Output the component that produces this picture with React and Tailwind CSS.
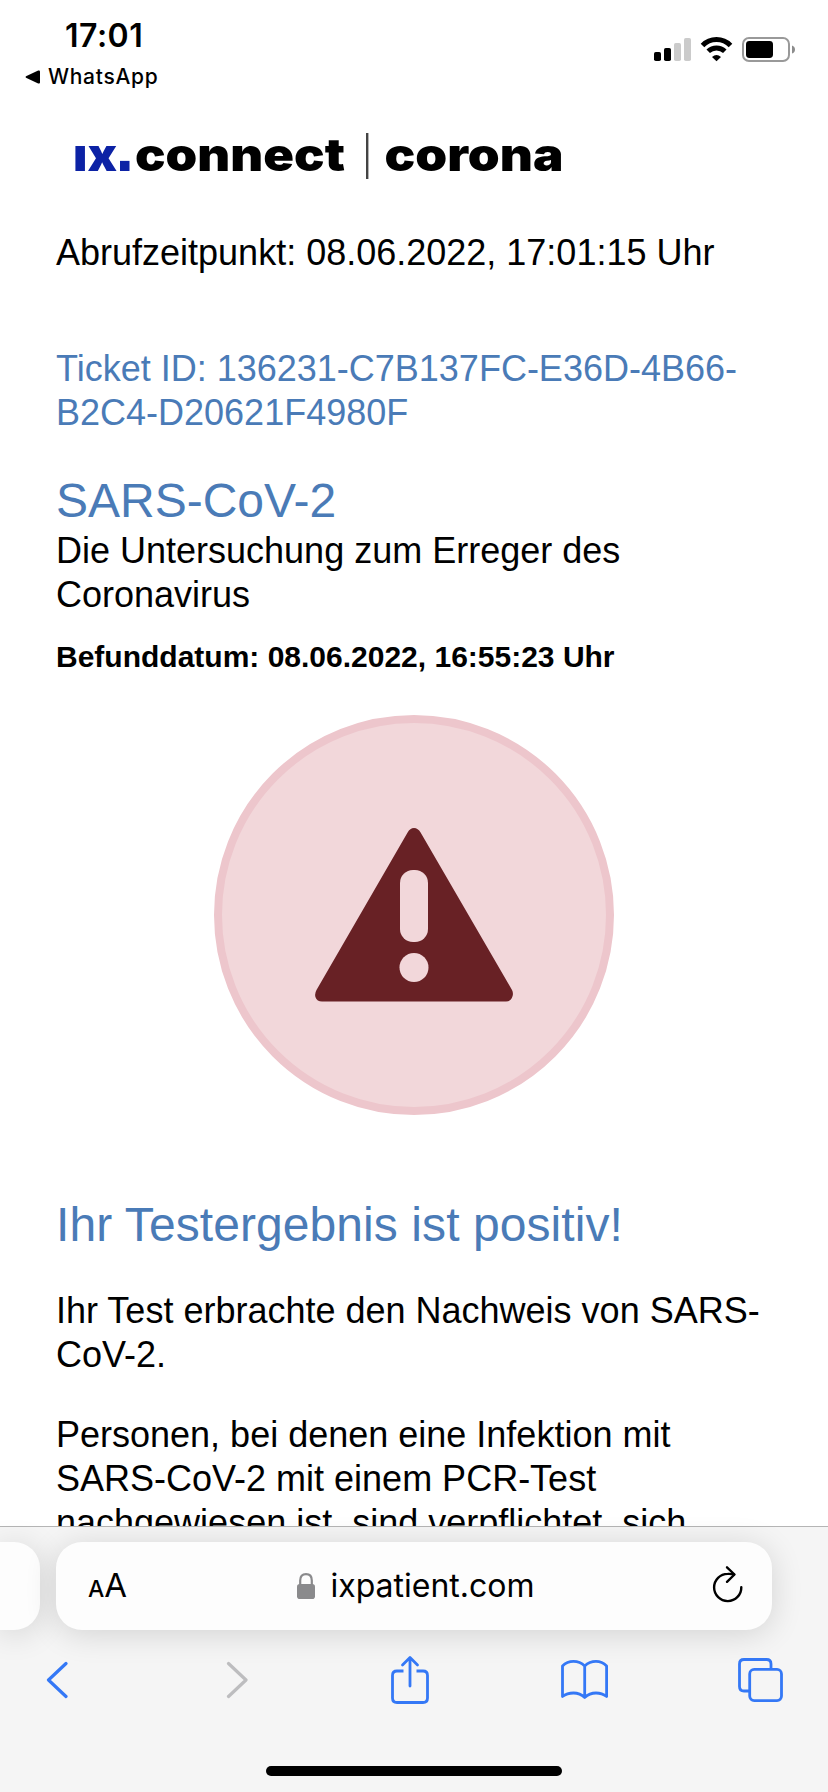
import React from 'react';

const StatusBar = () => {
    return (
        <div className="flex h-[100px] shrink-0 justify-between pl-6 pr-[33px] pt-[18px] font-['Inter',sans-serif]">
            <div>
                <p className="pl-[41px] text-[32px] leading-[36px] font-semibold tracking-[0.5px]">17:01</p>
                <div className="mt-[10px] flex items-center">
                    <svg width="16" height="14" viewBox="0 0 16 14" className="ml-[1px] mr-[7px]">
                        <path d="M1 6.2 L13.2 0.6 Q15 0 15 1.6 V12.4 Q15 14 13.2 13.4 L1 7.8 Q0 7 1 6.2Z" />
                    </svg>
                    <span className="text-[21px] leading-[26px] font-medium tracking-[0.7px]">WhatsApp</span>
                </div>
            </div>
            <svg width="142" height="28" viewBox="652 36 142 28" className="mt-[18px]">
                <rect x="653" y="52" width="7" height="9" rx="1.8" />
                <rect x="663" y="48" width="7" height="13" rx="1.8" />
                <rect x="673" y="43" width="7" height="18" rx="1.8" fill="#cbcbcb" />
                <rect x="683" y="38" width="7" height="23" rx="1.8" fill="#cbcbcb" />
                <g fill="none" stroke="#000" strokeWidth="5">
                    <path d="M701.5 45.4 A19.5 19.5 0 0 1 729.5 45.4" />
                    <path d="M707.2 51.3 A12 12 0 0 1 723.8 51.3" />
                </g>
                <path d="M711 57 Q715.5 53 720 57 L715.5 61.2Z" />
                <rect x="742" y="38" width="46" height="23" rx="6" fill="none" stroke="#999" strokeWidth="2" />
                <rect x="745" y="41" width="27" height="17" rx="3.4" />
                <path d="M791 45.5 Q794 46.5 794 49.5 Q794 52.5 791 53.5Z" fill="#8c8c8c" />
            </svg>
        </div>
    );
};

const Logo = () => {
    return (
        <svg
            width="520"
            height="70"
            viewBox="56 120 520 70"
            className="mt-5 shrink-0 font-['Inter',sans-serif] font-black blur-[0.7px]"
            fontSize="45"
        >
            <g fill="#0c22a5">
                <text x="73" y="171" textLength="44" lengthAdjust="spacingAndGlyphs">ıx</text>
                <text x="114.5" y="171" fontSize="54" className="font-['DejaVu_Sans',sans-serif] font-bold">.</text>
            </g>
            <text x="135" y="171" textLength="210" lengthAdjust="spacingAndGlyphs">connect</text>
            <text x="384.5" y="171" textLength="179" lengthAdjust="spacingAndGlyphs">corona</text>
            <rect x="366" y="133" width="2.4" height="46" fill="#444" />
        </svg>
    );
};

const Warning = () => {
    return (
        <div className="mx-auto mt-10 flex h-[400px] w-[400px] shrink-0 items-center justify-center rounded-full border-8 border-[#edc6cc] bg-[#f2d7da]">
            <svg width="200" height="176" viewBox="314 827 200 176">
                <path
                    fill="#682125"
                    d="M407.6 832.5 Q410 828 414 828 Q418 828 420.6 832.5 L512 990 Q513.5 993 512.6 996 Q511 1001.5 506 1001.5 H322 Q317 1001.5 315.4 997 Q314.5 993.5 316.5 990Z"
                />
                <rect x="400" y="870" width="28" height="72" rx="13" fill="#f2d7da" />
                <circle cx="414" cy="967.5" r="14.5" fill="#f2d7da" />
            </svg>
        </div>
    );
};

const AddressBar = () => {
    return (
        <div className="mt-[15px] flex gap-4">
            <div className="h-[88px] w-10 rounded-r-[26px] bg-[#fdfdfd] shadow-[0_4px_32px_rgba(0,0,0,0.14)]" />
            <div className="flex h-[88px] w-[716px] items-center justify-between rounded-[26px] bg-[#fdfdfd] pl-8 pr-[28px] shadow-[0_4px_32px_rgba(0,0,0,0.14)]">
                <div className="flex w-[200px] items-baseline">
                    <span className="text-[23px] font-medium">A</span>
                    <span className="text-[33px]">A</span>
                </div>
                <div className="flex items-center">
                    <svg width="18" height="26" viewBox="0 0 18 26" className="mr-[15px]">
                        <path d="M3.2 13 V7.5 Q3.2 1.2 9 1.2 Q14.8 1.2 14.8 7.5 V13" fill="none" stroke="#8a8a8c" strokeWidth="2.2" />
                        <rect x="0" y="11" width="18" height="15" rx="2.8" fill="#8a8a8c" />
                    </svg>
                    <span className="text-[32px] leading-[44px]">ixpatient.com</span>
                </div>
                <div className="flex w-[200px] justify-end">
                    <svg width="32" height="38" viewBox="712 1565 32 38" className="mb-1" fill="none" stroke="#000" strokeWidth="2.4" strokeLinecap="round" strokeLinejoin="round">
                        <path d="M741.3 1587.2 A13.6 13.6 0 1 1 727.7 1573.9 Q731 1573.7 734 1574.5" />
                        <path d="M727 1567.3 L734.5 1574.5 L727 1581.8" />
                    </svg>
                </div>
            </div>
        </div>
    );
};

const Toolbar = () => {
    return (
        <div className="mt-[24px] flex h-[52px] items-center pl-[46px]">
            <svg width="22" height="38" viewBox="0 0 22 38" fill="none" stroke="#3478f6" strokeWidth="3.2" strokeLinecap="round" strokeLinejoin="round">
                <path d="M20 2.5 L2.5 19 L20 35.5" />
            </svg>
            <svg width="22" height="38" viewBox="0 0 22 38" className="ml-[158px]" fill="none" stroke="#bdbdbf" strokeWidth="3.2" strokeLinecap="round" strokeLinejoin="round">
                <path d="M2.5 2.5 L20 19 L2.5 35.5" />
            </svg>
            <svg width="38" height="50" viewBox="391 1654 38 50" className="ml-[143px]" fill="none" stroke="#3478f6" strokeWidth="2.8" strokeLinecap="round" strokeLinejoin="round">
                <path strokeLinecap="butt" d="M403.5 1670 H397 Q392.5 1670 392.5 1674.5 V1697 Q392.5 1701.5 397 1701.5 H423 Q427.5 1701.5 427.5 1697 V1674.5 Q427.5 1670 423 1670 H416.5" />
                <path d="M410 1685 V1657 M402.5 1664 L410 1656.5 L417.5 1664" />
            </svg>
            <svg width="48" height="42" viewBox="561 1660 48 42" className="ml-[132px]" fill="none" stroke="#3478f6" strokeWidth="2.8" strokeLinejoin="round">
                <path d="M584.7 1667 Q580 1662.4 573.5 1662.4 Q567 1662.4 562.5 1667 V1697.5 Q567 1694 573.5 1694 Q580 1694 584.7 1698.5 Q589.5 1694 596 1694 Q602 1694 606.6 1697.5 V1667 Q602 1662.4 596 1662.4 Q589.5 1662.4 584.7 1667 V1698.5" />
            </svg>
            <svg width="46" height="46" viewBox="738 1657 46 46" className="ml-[129px]" fill="none" stroke="#3478f6" strokeWidth="2.8">
                <path d="M749 1691 H744 Q739.5 1691 739.5 1686.5 V1664 Q739.5 1659.5 744 1659.5 H766.5 Q771 1659.5 771 1664 V1669" />
                <rect x="749.7" y="1669.4" width="31.8" height="31.2" rx="4.5" />
            </svg>
        </div>
    );
};

export default function App() {
    return (
        <div className="flex h-[1792px] w-[828px] flex-col overflow-hidden bg-white font-['Liberation_Sans',sans-serif] text-black">
            <div className="flex h-[1526px] shrink-0 flex-col overflow-hidden">
                <StatusBar />
                <div className="flex flex-col px-14 text-[36px] leading-[44px] whitespace-nowrap">
                    <Logo />
                    <p className="mt-[41px]">Abrufzeitpunkt: 08.06.2022, 17:01:15 Uhr</p>
                    <p className="mt-[72px] text-[#4a7bb7]">
                        Ticket ID: 136231-C7B137FC-E36D-4B66-<br />
                        B2C4-D20621F4980F
                    </p>
                    <h1 className="mt-[40px] text-[48px] leading-[52px] text-[#4a7bb7]">SARS-CoV-2</h1>
                    <p className="mt-[2px]">
                        Die Untersuchung zum Erreger des<br />
                        Coronavirus
                    </p>
                    <p className="mt-[22px] text-[30px] leading-[36px] font-bold">Befunddatum: 08.06.2022, 16:55:23 Uhr</p>
                    <Warning />
                    <h2 className="mt-[84px] text-[48px] leading-[52px] tracking-[0.08px] text-[#4a7bb7]">Ihr Testergebnis ist positiv!</h2>
                    <p className="mt-[38px]">
                        Ihr Test erbrachte den Nachweis von SARS-<br />
                        CoV-2.
                    </p>
                    <p className="mt-9">
                        Personen, bei denen eine Infektion mit<br />
                        SARS-CoV-2 mit einem PCR-Test<br />
                        nachgewiesen ist, sind verpflichtet, sich
                    </p>
                </div>
            </div>
            <div className="flex h-[266px] flex-col border-t border-[#b5b5b5] bg-[#f5f5f5] font-['Inter',sans-serif]">
                <AddressBar />
                <Toolbar />
                <div className="mx-auto mt-[60px] h-[10px] w-[296px] rounded-full bg-black" />
            </div>
        </div>
    );
}
